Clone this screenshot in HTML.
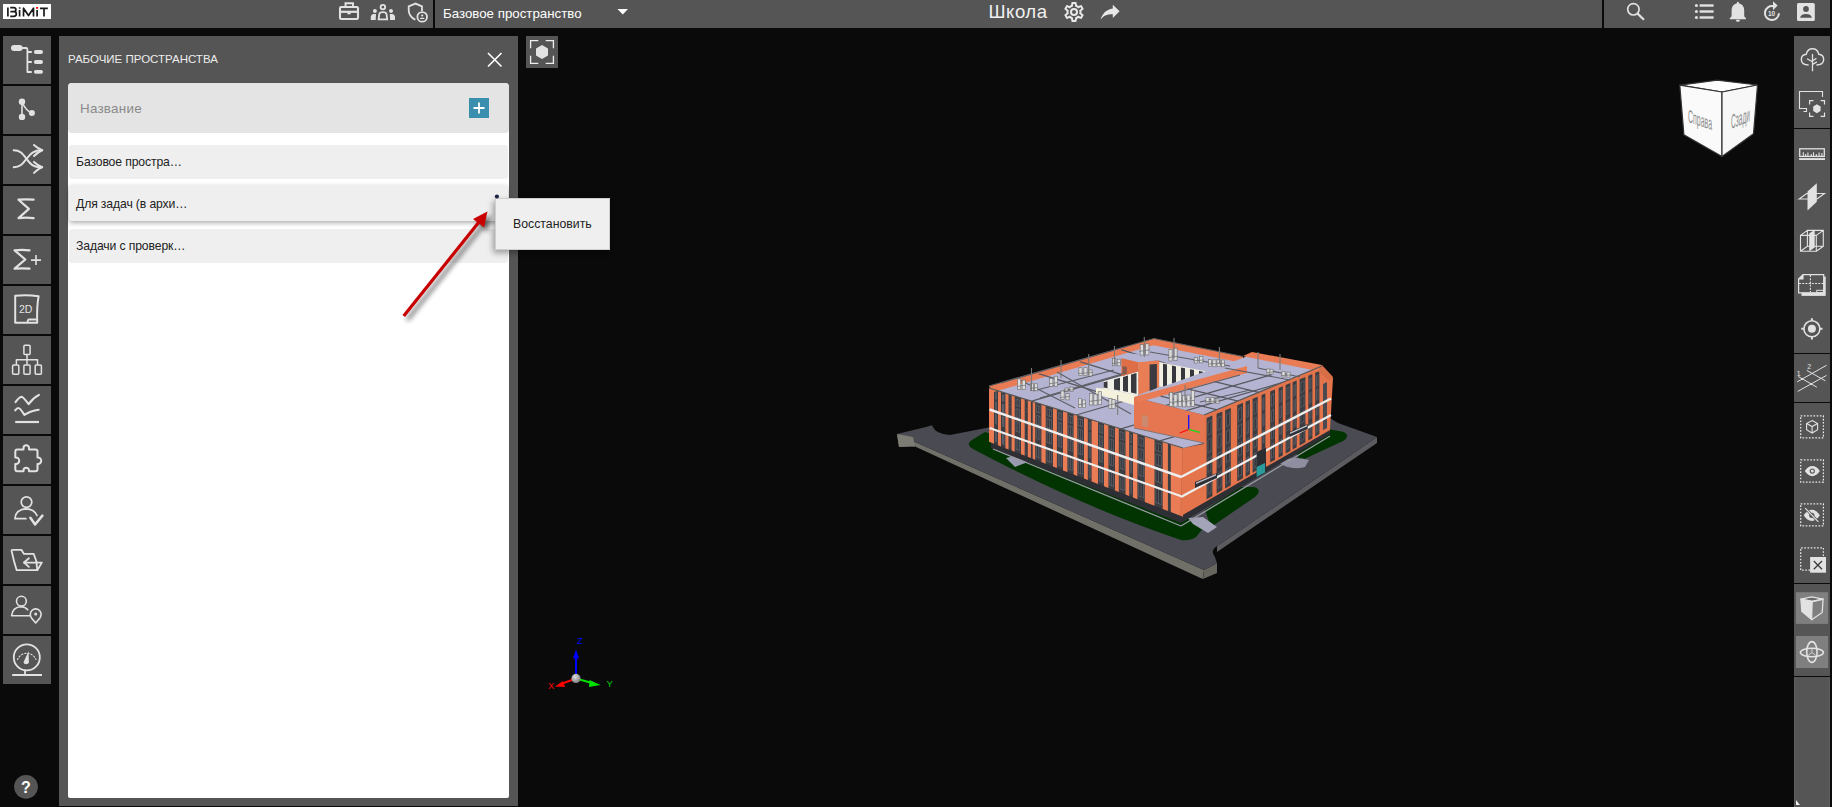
<!DOCTYPE html>
<html><head><meta charset="utf-8">
<style>
*{margin:0;padding:0;box-sizing:border-box}
html,body{width:1832px;height:807px;overflow:hidden;background:#0a0a0a;font-family:"Liberation Sans",sans-serif;position:relative}
.abs{position:absolute}
svg{position:absolute;overflow:visible}
#top{left:0;top:0;width:1830px;height:28px;background:#555}
.sep{position:absolute;top:0;width:2px;height:28px;background:#0a0a0a}
.lb{position:absolute;left:3px;width:48px;height:48px;background:#555}
#panel{left:59px;top:36px;width:459px;height:770px;background:#555}
#ptitle{left:68px;top:53px;color:#ececec;font-size:11.5px;white-space:nowrap}
#pwhite{left:68px;top:83px;width:441px;height:715px;background:#fff;border-radius:4px 4px 2px 2px}
#inp{left:68px;top:83px;width:441px;height:50px;background:#e4e4e4;border-radius:4px}
#inph{left:80px;top:100.5px;color:#8a8a8a;font-size:13.4px;letter-spacing:0.25px;white-space:nowrap}
.item{position:absolute;left:69px;width:439px;background:#efefef;border-radius:3px;font-size:12.2px;letter-spacing:-0.12px;color:#222;white-space:nowrap}
.item span{position:absolute;left:7px}
#rbar{left:1794px;top:36px;width:36px;height:771px;background:#555}
.rsep{position:absolute;left:1794px;width:36px;height:1px;background:#0a0a0a}
.txt{position:absolute;white-space:nowrap}
</style></head><body>
<div id="top" class="abs"></div>
<div class="sep" style="left:433px"></div>
<div class="sep" style="left:1602px"></div>

<!-- logo -->
<svg style="left:0;top:0" width="60" height="24">
<rect x="3" y="4" width="48" height="15" fill="#fff"/>
<g stroke="#1a1a1a" stroke-width="1.7" fill="none" stroke-linejoin="round">
<path d="M7.9 7.5V16.4"/>
<path d="M10.2 7.7H13.6Q15.9 7.7 15.9 9.7Q15.9 11.7 13.6 11.7H10.4M13.8 11.7Q16.3 11.7 16.3 14Q16.3 16.3 13.8 16.3H10.2"/>
<path d="M19.6 10V16.4M23.5 16.4V8.2L28.5 15.6L33.5 8.2V16.4M37.1 10V16.4M40 8.3H47.8M44 8.3V16.4"/>
</g>
<rect x="18.8" y="7.3" width="1.7" height="1.4" fill="#1a1a1a"/>
<rect x="36.1" y="7" width="2" height="1.8" fill="#f00"/>
</svg>

<!-- top bar icons -->
<svg style="left:334px;top:0" width="100" height="28" fill="none" stroke="#e2e2e2">
<!-- briefcase -->
<rect x="6" y="7" width="18" height="12" rx="1.2" stroke-width="2.1"/>
<path d="M11.5 6.8V3.3H19V6.8" stroke-width="1.9"/>
<path d="M6 11.8H24" stroke-width="2.2"/>
<rect x="13.4" y="11.6" width="3.3" height="2.7" fill="#e2e2e2" stroke="none"/>
<!-- people -->
<circle cx="48.9" cy="7.1" r="2.3" stroke-width="1.8"/>
<circle cx="40.9" cy="10.9" r="2" fill="#e2e2e2" stroke="none"/>
<circle cx="57" cy="10.9" r="2" fill="#e2e2e2" stroke="none"/>
<path d="M44.6 19.3L45.3 14Q45.8 12.2 48.9 12.2Q52 12.2 52.5 14L53.2 19.3Z" stroke-width="1.8"/>
<path d="M36.8 19.9V16.5Q37.2 14.2 39.5 14.1H42L41.7 19.9Z M61 19.9V16.5Q60.6 14.2 58.3 14.1H55.8L56.1 19.9Z" fill="#e2e2e2" stroke="none"/>
<!-- shield -->
<path d="M81.4 19.8Q74.7 16.5 74.7 10V6.4L81.5 3.6L88 6.4V11" stroke-width="1.8"/>
<circle cx="88.2" cy="16.9" r="4.8" stroke-width="1.8"/>
<circle cx="88.2" cy="15.5" r="1.1" fill="#e2e2e2" stroke="none"/>
<path d="M85.7 19Q85.9 17.4 88.2 17.4Q90.5 17.4 90.7 19Z" fill="#e2e2e2" stroke="none"/>
</svg>

<div class="txt" style="left:443px;top:5.5px;color:#fff;font-size:13.3px">Базовое пространство</div>
<svg style="left:617px;top:8px" width="12" height="8"><path d="M0.5 1H11L5.75 6.5Z" fill="#fff"/></svg>

<div class="txt" style="left:988.5px;top:1px;color:#f0f0f0;font-size:18.6px;letter-spacing:0.5px">Школа</div>
<!-- gear -->
<svg style="left:1062px;top:0px" width="24" height="24" viewBox="0 0 24 24">
<path fill="#e8e8e8" d="M12,8A4,4 0 0,1 16,12A4,4 0 0,1 12,16A4,4 0 0,1 8,12A4,4 0 0,1 12,8M12,10A2,2 0 0,0 10,12A2,2 0 0,0 12,14A2,2 0 0,0 14,12A2,2 0 0,0 12,10M10,22C9.75,22 9.54,21.82 9.5,21.58L9.13,18.93C8.5,18.68 7.96,18.34 7.44,17.94L4.95,18.95C4.73,19.03 4.46,18.95 4.34,18.73L2.34,15.27C2.21,15.05 2.27,14.78 2.46,14.63L4.57,12.97L4.5,12L4.57,11L2.46,9.37C2.27,9.22 2.21,8.95 2.34,8.73L4.34,5.27C4.46,5.05 4.73,4.96 4.95,5.05L7.44,6.05C7.96,5.66 8.5,5.32 9.13,5.07L9.5,2.42C9.54,2.18 9.75,2 10,2H14C14.25,2 14.46,2.18 14.5,2.42L14.87,5.07C15.5,5.32 16.04,5.66 16.56,6.05L19.05,5.05C19.27,4.96 19.54,5.05 19.66,5.27L21.66,8.73C21.79,8.95 21.73,9.22 21.54,9.37L19.43,11L19.5,12L19.43,13L21.54,14.63C21.73,14.78 21.79,15.05 21.66,15.27L19.66,18.73C19.54,18.95 19.27,19.04 19.05,18.95L16.56,17.95C16.04,18.34 15.5,18.68 14.87,18.93L14.5,21.58C14.46,21.82 14.25,22 14,22H10M11.25,4L10.88,6.61C9.68,6.86 8.62,7.5 7.85,8.39L5.44,7.35L4.69,8.65L6.8,10.2C6.4,11.37 6.4,12.64 6.8,13.8L4.68,15.36L5.43,16.66L7.86,15.62C8.63,16.5 9.68,17.14 10.87,17.38L11.24,20H12.76L13.13,17.39C14.32,17.14 15.37,16.5 16.14,15.62L18.57,16.66L19.32,15.36L17.2,13.81C17.6,12.64 17.6,11.37 17.2,10.2L19.31,8.65L18.56,7.35L16.15,8.39C15.38,7.5 14.32,6.86 13.12,6.62L12.75,4H11.25Z"/>
</svg>
<!-- share arrow -->
<svg style="left:1100px;top:4px" width="20" height="18" viewBox="0 0 20 18">
<path fill="#e8e8e8" d="M19.6 7.3L12.8 0.8V4.6C5.8 5.6 2.2 10.2 0.6 15.6C3.2 12 6.5 10.2 12.8 10.2V14.1Z"/>
</svg>

<!-- top right icons -->
<svg style="left:1620px;top:0" width="212" height="28" fill="none" stroke="#e2e2e2">
<circle cx="13.4" cy="9.3" r="5.7" stroke-width="1.7"/>
<path d="M17.6 13.6L24 19.8" stroke-width="2.2"/>
<g fill="#e2e2e2" stroke="none">
<circle cx="76.4" cy="5.5" r="1.5"/><circle cx="76.4" cy="11.5" r="1.5"/><circle cx="76.4" cy="17.5" r="1.5"/>
<rect x="79.6" y="4.3" width="14" height="2.4"/><rect x="79.6" y="10.3" width="14" height="2.4"/><rect x="79.6" y="16.3" width="14" height="2.4"/>
<!-- bell -->
<path d="M117.9 1.8Q118.9 1.8 118.9 3.2Q124.2 4.6 124.2 10.5V16.2L126 18.3V19.3H109.8V18.3L111.6 16.2V10.5Q111.6 4.6 116.9 3.2Q116.9 1.8 117.9 1.8Z"/>
<path d="M115.8 19.8H120Q120 21.9 117.9 21.9Q115.8 21.9 115.8 19.8Z"/>
<!-- account box -->
<rect x="177" y="3" width="17.8" height="18" rx="1.6"/>
</g>
<!-- replay 10 -->
<path d="M153.5 6.3A7 7 0 1 0 158.9 13.2" stroke-width="2"/>
<path d="M153 1.2L157.6 5.6L153 10.2Z" fill="#e2e2e2" stroke="none"/>
<text x="148" y="15.6" font-size="6.5" font-weight="bold" fill="#e2e2e2" stroke="none" font-family="Liberation Sans">10</text>
<circle cx="186" cy="9" r="2.9" fill="#555" stroke="none"/>
<path d="M180.1 17.8Q180.6 14 186 14Q191.4 14 191.9 17.8Z" fill="#555" stroke="none"/>
</svg>

<!-- left sidebar -->
<div class="lb" style="top:36px"></div>
<div class="lb" style="top:86px"></div>
<div class="lb" style="top:136px"></div>
<div class="lb" style="top:186px"></div>
<div class="lb" style="top:236px"></div>
<div class="lb" style="top:286px"></div>
<div class="lb" style="top:336px"></div>
<div class="lb" style="top:386px"></div>
<div class="lb" style="top:436px"></div>
<div class="lb" style="top:486px"></div>
<div class="lb" style="top:536px"></div>
<div class="lb" style="top:586px"></div>
<div class="lb" style="top:636px"></div>

<svg style="left:3px;top:36px" width="48" height="650" fill="none" stroke="#e2e2e2" stroke-linecap="round" stroke-linejoin="round">
<!-- 1 tree -->
<g>
<rect x="8" y="9" width="11.6" height="6" rx="3" fill="#e2e2e2" stroke="none"/>
<rect x="30.9" y="14" width="9.1" height="3.9" rx="1.95" fill="#e2e2e2" stroke="none"/>
<rect x="30.9" y="24.1" width="9.1" height="3.9" rx="1.95" fill="#e2e2e2" stroke="none"/>
<rect x="30.9" y="33.9" width="9.1" height="3.9" rx="1.95" fill="#e2e2e2" stroke="none"/>
<path d="M19 12H23Q24.4 12 24.4 13.4V36H28.8M24.4 16H28.8M24.4 26H28.8" stroke-width="1.8" stroke-linecap="butt"/>
</g>
<!-- 2 branch -->
<g transform="translate(0,50)">
<circle cx="19" cy="15.8" r="3.2" fill="#e2e2e2" stroke="none"/>
<circle cx="19" cy="30.9" r="3.2" fill="#e2e2e2" stroke="none"/>
<circle cx="28.9" cy="27" r="3" fill="#e2e2e2" stroke="none"/>
<path d="M19 16V31M19.5 17Q23 24.5 28.5 27" stroke-width="1.6"/>
</g>
<!-- 3 shuffle -->
<g transform="translate(0,100)" stroke-width="2">
<path d="M10.7 14.3C17 14.3 19.5 17.5 23.5 22.9S30 31.2 39 31.2"/>
<path d="M10.7 31.2C17 31.2 19.5 28 23.5 22.9S30 14.3 39 14.3"/>
<path d="M31 9Q35 12.6 39.3 14.3Q35 16 31 20"/>
<path d="M31 25.9Q35 29.5 39.3 31.2Q35 33 31 36.9"/>
</g>
<!-- 4 sigma -->
<g transform="translate(0,150)" stroke-width="2.2">
<path d="M30.6 13.7Q23 12.9 15.5 13.7L25.9 22.9L15.5 32.1Q23 31.3 30.6 32.1"/>
</g>
<!-- 5 sigma plus -->
<g transform="translate(0,200)">
<path d="M26.5 14.3Q19 13.5 11.6 14.3L22.3 23.5L11.6 32.7Q19 31.9 26.5 32.7" stroke-width="2.2"/>
<path d="M28 24.1H38M33 19.1V29.1" stroke-width="1.6" stroke-linecap="butt"/>
</g>
<!-- 6 2D -->
<g transform="translate(0,250)">
<path d="M12.2 9.7Q24 8.4 35.6 10.2Q33.7 20 34.2 36.7H12.2Z" stroke-width="2"/>
<path d="M24.5 35.5L25.5 33.5H33" stroke-width="1.8"/>
<text x="16" y="26.8" font-size="10.5" fill="#e2e2e2" stroke="none" font-family="Liberation Sans">2D</text>
</g>
<!-- 7 hierarchy -->
<g transform="translate(0,300)" stroke-width="1.5">
<rect x="20.9" y="9.3" width="6.2" height="9.3" rx="1"/>
<path d="M24 18.6V28M13.4 28V23.8H34.5V28"/>
<rect x="9.6" y="29" width="6.2" height="9.3" rx="1"/>
<rect x="20.9" y="29" width="6.2" height="9.3" rx="1"/>
<rect x="32.2" y="29" width="6.2" height="9.3" rx="1"/>
</g>
<!-- 8 charts -->
<g transform="translate(0,350)" stroke-width="2">
<path d="M12.5 16.1Q16 11 18.7 10.7Q20 10.7 25.6 18.1Q30 12 36 8.9"/>
<path d="M12.2 24.4Q14 21.8 15.5 22Q17 22 21.4 28.9Q26 26 29.7 25Q33 24 35.7 23.8"/>
<path d="M12.2 36H36" stroke-linecap="butt" stroke-width="2.2"/>
</g>
<!-- 9 puzzle -->
<g transform="translate(0,400)" stroke-width="2">
<path d="M20.5 13.5V12A2.75 2.75 0 0 1 26 12V13.5H32.5A2 2 0 0 1 34.5 15.5V21.5H35A3.25 3.25 0 0 1 35 28H34.5V33.3A2 2 0 0 1 32.5 35.3H26V34.5A2.75 2.75 0 0 0 20.5 34.5V35.3H14.3A2 2 0 0 1 12.3 33.3V28H13A3.25 3.25 0 0 0 13 21.5H12.3V15.5A2 2 0 0 1 14.3 13.5Z"/>
</g>
<!-- 10 person check -->
<g transform="translate(0,450)">
<circle cx="23.5" cy="16.1" r="5.3" stroke-width="1.7"/>
<path d="M22.9 32.7H11.9Q12.5 23.5 23 22.9Q31 23 34 29.5" stroke-width="1.7"/>
<path d="M27.4 31.8L32.1 38.5L39.4 29.6" stroke-width="2.5"/>
</g>
<!-- 11 folder -->
<g transform="translate(0,500)" stroke-width="1.8">
<path d="M33.5 25.5L30.6 17.8H20.8L18.4 13.8H9.5Q8.4 13.8 8.6 15Q11 26 13.7 34.2H34.3L38.8 26.6H21"/>
<path d="M34.3 34.2L33.4 26"/>
<path d="M25.9 22.3L21 26.5L25.9 30.9"/>
</g>
<!-- 12 person pin -->
<g transform="translate(0,550)" stroke-width="1.6">
<circle cx="18.4" cy="15.2" r="4.9"/>
<path d="M26.8 29.7H8.6Q9.5 21 18.3 20.8Q22.5 20.9 24.7 23.8"/>
<path d="M32.7 37L28.5 32Q27.3 30.4 27.3 28.3A5.4 5.4 0 0 1 38.1 28.3Q38.1 30.4 36.9 32Z"/>
<circle cx="32.7" cy="28" r="1.5" fill="#e2e2e2" stroke="none"/>
</g>
<!-- 13 gauge -->
<g transform="translate(0,600)">
<circle cx="23.8" cy="21.4" r="13" stroke-width="1.8"/>
<path d="M14.5 23.5A10 10 0 0 1 33 23.5" stroke-width="1.1" stroke-dasharray="1.2 2"/>
<path d="M25.6 15.2L20.5 26.2Q21 28.4 23.3 28.3Q25.3 28.2 25.9 26.5Z" fill="#e2e2e2" stroke="none"/>
<path d="M22 34.4V38" stroke-width="1.8"/>
<path d="M9.2 39H39" stroke-width="2" stroke-linecap="butt"/>
</g>
</svg>

<!-- help -->
<svg style="left:14px;top:775px" width="24" height="24">
<circle cx="12" cy="11.8" r="11.9" fill="#555"/>
<text x="12" y="18" text-anchor="middle" font-size="16" font-weight="bold" fill="#fff" font-family="Liberation Sans">?</text>
</svg>

<!-- panel -->
<div id="panel" class="abs"></div>
<div id="ptitle" class="abs">РАБОЧИЕ ПРОСТРАНСТВА</div>
<svg style="left:487px;top:52px" width="16" height="16"><path d="M1 1L14.5 14.5M14.5 1L1 14.5" stroke="#fff" stroke-width="1.6"/></svg>
<div id="pwhite" class="abs"></div>
<div id="inp" class="abs"></div>
<div id="inph" class="abs">Название</div>
<svg style="left:469px;top:98px" width="20" height="20"><rect width="20" height="20" fill="#3a8eae"/><path d="M10 4.5V15.5M4.5 10H15.5" stroke="#fff" stroke-width="1.8"/></svg>
<div class="item" style="top:145px;height:34px"><span style="top:10px">Базовое простра…</span></div>
<div class="item" style="top:185px;height:36px;box-shadow:0 2px 5px rgba(0,0,0,0.32)"><span style="top:12px">Для задач (в архи…</span></div>
<div class="item" style="top:229px;height:34px"><span style="top:10px">Задачи с проверк…</span></div>

<!-- viewer button -->
<svg style="left:526px;top:36px" width="32" height="32">
<rect width="32" height="32" fill="#555"/>
<path d="M4.6 12.3V4.6H12.3M19.7 4.6H27.4V12.3M27.4 19.7V27.4H19.7M12.3 27.4H4.6V19.7" fill="none" stroke="#eee" stroke-width="1.3"/>
<path d="M16 8.9L22 12.4V19.6L16 23.1L10 19.6V12.4Z" fill="#e2e2e2"/>
</svg>

<!-- right bar -->
<div id="rbar" class="abs"></div>
<div class="rsep" style="top:128px"></div>
<div class="rsep" style="top:353px"></div>
<div class="rsep" style="top:402px"></div>
<div class="rsep" style="top:583px"></div>
<div class="rsep" style="top:676px"></div>

<!-- right bar icons -->
<svg style="left:1794px;top:0" width="36" height="700" fill="none" stroke="#e2e2e2" stroke-width="1.3">
<!-- tree -->
<path d="M14.6 25Q7.5 25 7.3 19.5Q7.4 14.5 12.3 14.2Q13.5 8.8 18.5 8.8Q23.5 8.8 24.7 14.2Q29.6 14.6 29.7 19.5Q29.5 25 22.4 25" transform="translate(0,40)" stroke-width="1.4"/>
<path d="M18.5 54V71.2M13 58.7L18.5 61.8M22.4 58.2L18.5 61M22.9 61.9L18.5 64.5" stroke-width="1.3"/>
<!-- zoom select -->
<path d="M28.5 97V91.5H5.5V108.5H12.5V111.5H9.5" stroke-width="1.1"/>
<path d="M15.6 104.5V100.6H19.5M26.6 100.6H30.5V104.5M30.5 112.4V116.3H26.6M19.5 116.3H15.6V112.4" stroke-width="1.2"/>
<path d="M22.9 104.2L26.6 106.4V111L22.9 113.2L19.2 111V106.4Z" fill="#e2e2e2" stroke="none"/>
<!-- ruler -->
<rect x="5.7" y="148.8" width="24.6" height="7.6" stroke-width="1.3"/>
<path d="M9.3 152.2V156M11.6 154V156M13.9 152.5V156M17.2 154V156M19.5 152.2V156M22.3 154V156M25.1 152.5V156M27.9 153V156" stroke-width="1.1"/>
<rect x="5.1" y="158.1" width="25.9" height="1.9" fill="#e2e2e2" stroke="none"/>
<!-- plane -->
<path d="M13.5 191.6L22.8 183.2V201.8L13.5 210.6Z" fill="#e2e2e2" stroke="none"/>
<path d="M5.2 199L12.7 193.5H30.4L23 199Z" stroke-width="1.2"/>
<!-- cube section -->
<path d="M6.5 235.4H22.3V251.3H6.5Z M13.4 230.4H29.3V246.3H13.4Z M6.5 235.4L13.4 230.4M22.3 235.4L29.3 230.4M22.3 251.3L29.3 246.3M6.5 251.3L13.4 246.3" stroke-width="1.1"/>
<path d="M15.2 233.5L20.7 229.8V247.5L15.2 251.3Z" fill="#e2e2e2" stroke="none"/>
<!-- floor plan -->
<path d="M7.5 276.5H31.7V295.9H7.5Z" fill="#e2e2e2" stroke="none"/>
<path d="M9 274.6H29.7V292.8H4.6V279Z" fill="#555" stroke-width="1.2"/>
<path d="M4.6 279H9V274.6" stroke-width="1.1" fill="#e2e2e2"/>
<path d="M5 283.5H29.5M16.4 275V292.5" stroke-width="1.1" stroke-dasharray="2 1.2"/>
<rect x="22.8" y="290.3" width="6.5" height="2.5" stroke-width="1"/>
<!-- target -->
<circle cx="17.9" cy="328.8" r="8" stroke-width="1.6"/>
<circle cx="17.9" cy="328.8" r="4" fill="#e2e2e2" stroke="none"/>
<path d="M17.9 318.2V320.8M17.9 336.8V339.4M7.3 328.8H9.9M25.9 328.8H28.5" stroke-width="2"/>
<!-- grid -->
<path d="M3.2 381.8L32.5 365.3M3.7 391.4L32.5 375.4M4.3 376.5L22.9 387.2M12.8 370.4L31.4 380.8" stroke-width="1"/>
<circle cx="8" cy="379" r="1" fill="#e2e2e2" stroke="none"/>
<circle cx="17" cy="384" r="1" fill="#e2e2e2" stroke="none"/>
<text x="2.8" y="376" font-size="7" fill="#e2e2e2" stroke="none" font-family="Liberation Sans">1</text>
<text x="13.3" y="369" font-size="7" fill="#e2e2e2" stroke="none" font-family="Liberation Sans">2</text>
<!-- dashed boxes -->
<g stroke-dasharray="1.6 1.6" stroke-width="1.2" stroke="#eee">
<rect x="6.7" y="415.9" width="22.7" height="22"/>
<rect x="6.7" y="459.9" width="22.7" height="22.2"/>
<rect x="6.7" y="503.9" width="22.7" height="22"/>
<path d="M16.1 570.1H6.7V547.9H29.4V557"/>
</g>
<!-- cube in box -->
<path d="M18.1 420.6L23.6 423.5V429.8L18.1 433L12.6 429.8V423.5Z M12.6 423.5L18.1 426.5L23.6 423.5M18.1 426.5V433" stroke-width="1.1"/>
<!-- eye -->
<path d="M10.8 471.1Q14 466 18.3 466Q22.6 466 25.8 471.1Q22.6 476.2 18.3 476.2Q14 476.2 10.8 471.1Z" fill="#e2e2e2" stroke="none"/>
<circle cx="18.3" cy="471.1" r="2.6" fill="#555" stroke="none"/>
<circle cx="18.3" cy="471.1" r="1.5" fill="#e2e2e2" stroke="none"/>
<!-- eye off -->
<path d="M9.7 515.3Q13.2 509.7 17.8 509.7Q22.4 509.7 25.9 515.3Q22.4 520.9 17.8 520.9Q13.2 520.9 9.7 515.3Z" fill="#e2e2e2" stroke="none"/>
<circle cx="17.8" cy="515.3" r="2.6" fill="#555" stroke="none"/>
<path d="M11.2 508.2L24.4 521.9" stroke="#555" stroke-width="2.6"/>
<path d="M11.2 508.2L24.4 521.9" stroke-width="1.2"/>
<!-- X square -->
<rect x="16.1" y="557" width="15.9" height="15.7" fill="#e2e2e2" stroke="none"/>
<path d="M19.8 561L28 569.2M28 561L19.8 569.2" stroke="#3c3c3c" stroke-width="1.3"/>
<!-- cube box -->
<rect x="1.9" y="592.2" width="32.2" height="31.7" fill="#7f7f7f" stroke="none"/>
<path d="M6.8 599.1L17.7 596.8L29.1 599.1L18.2 601.5Z" fill="#6a6a6a" stroke="#e2e2e2" stroke-width="1.3"/>
<path d="M6.8 599.1L18.2 601.5L17.7 619.7L7.8 611.4Z" fill="#e2e2e2" stroke="#e2e2e2" stroke-width="1.1"/>
<path d="M18.2 601.5L29.1 599.1L28.2 612.5L17.7 619.7" stroke-width="1.3"/>
<!-- orbit box -->
<rect x="1.9" y="636" width="32.2" height="32" fill="#7f7f7f" stroke="none"/>
<ellipse cx="17.9" cy="652" rx="5.2" ry="10.4" stroke-width="1.6"/>
<ellipse cx="17.9" cy="652.5" rx="11.5" ry="4.3" stroke-width="1.6"/>
<path d="M17.9 648.5V652.5L14 655.5M17.9 652.5L21.8 655.5" stroke-width="0.8"/>
<!-- bottom group border -->
<path d="M0.5 677V807M35.5 677V807" stroke="#5e5e5e" stroke-width="1"/>
<path d="M2 800V805H6Z" fill="#eee" stroke="none"/>
</svg>

<!-- popup -->
<div class="abs" style="left:495px;top:198px;width:115px;height:52px;background:#efefef;border:1px solid #cfcfcf;box-shadow:-2px 3px 6px rgba(0,0,0,0.35)"></div>
<svg style="left:492px;top:192px" width="10" height="6"><circle cx="4.9" cy="4.5" r="2.1" fill="#1e2440"/></svg>
<div class="txt" style="left:513px;top:217px;color:#222;font-size:12.3px">Восстановить</div>

<!-- red arrow -->
<svg style="left:0;top:0" width="600" height="400">
<defs><filter id="sh" x="-20%" y="-20%" width="140%" height="140%"><feGaussianBlur stdDeviation="2.4"/></filter></defs>
<g transform="translate(3.5,4)" opacity="0.6" filter="url(#sh)">
<path d="M403.7 316L479 222" stroke="#000" stroke-width="3.2"/>
<path d="M487.4 211.6L473 219L484.2 227.4Z" fill="#000"/>
</g>
<path d="M403.7 316L479 222" stroke="#c80000" stroke-width="3.2"/>
<path d="M487.4 211.6L473 219L484.2 227.4Z" fill="#c80000"/>
</svg>

<!-- BUILDING START --><svg style="left:0;top:0" width="1832" height="807"><path d="M897 434L899 447Q906 446.5 915 446.5L1202.7 579L1204 570Z" fill="#707068"/><path d="M1204 570L1203 579L1217 573L1217 563Z" fill="#66665f"/><path d="M1377 437L1377 443L1217 552L1217 546Z" fill="#5c5c60"/><path d="M897 434L926 427L932 425.3Q935 434 950 435L991 427L1100 400L1300 400L1338 423L1377 437L1217 546Q1210 551 1214.5 556L1217 563L1204 570Z" fill="#4a4a52"/><path d="M897 434L899 447Q908 446 915 446.5L913 437Z" fill="#7c7c74"/><path d="M972 440Q965 444 973 449Q1080 506 1181 540Q1190 541 1196 537L1205 526L1190 519L1100 470L985 432Z" fill="#023402"/><path d="M1211 527L1255 497Q1263 490 1254 487L1240 487L1205 510Z" fill="#023402"/><path d="M1300 461L1343 441Q1351 436 1344 432L1328 429L1296 452Z" fill="#023402"/><polygon points="1188.0,518.0 1203.0,517.0 1217.0,527.0 1208.0,533.0 1193.0,524.0" fill="#a4a4b8"/><polygon points="1006.0,458.0 1018.0,455.0 1028.0,462.0 1015.0,467.0" fill="#9a9aae"/><path d="M1278 462Q1292 455 1309 460L1305 467Q1290 471 1278 462Z" fill="#8e8ea0"/><polygon points="1268.0,455.0 1300.0,440.0 1306.0,447.0 1276.0,461.0" fill="#7a7a86" /><polygon points="991.0,440.0 1181.0,514.0 1181.0,523.0 991.0,448.0" fill="#2e2f34" /><path d="M993.0 449.0L1181.0 526.0" stroke="#9a9aa4" stroke-width="1.3" /><path d="M1181.0 526.0L1330.0 436.0" stroke="#9a9aa4" stroke-width="1.3" /><polygon points="1181.0,514.0 1330.0,426.0 1330.0,434.0 1181.0,523.0" fill="#2e2f34" /><polygon points="989.0,388.0 1183.0,448.0 1181.0,516.0 992.0,443.0" fill="#3c3d42" /><polygon points="995.0,392.0 997.0,392.7 997.0,399.7 995.0,399.1" fill="#5d6068" /><polygon points="995.8,392.9 995.6,393.2 995.6,398.5 995.8,398.2" fill="#34363c" /><polygon points="996.4,393.2 996.2,393.6 996.2,398.8 996.4,398.5" fill="#34363c" /><polygon points="995.0,401.3 997.0,401.9 997.0,411.2 995.0,410.5" fill="#5d6068" /><polygon points="995.8,402.2 995.6,402.5 995.6,409.9 995.8,409.6" fill="#34363c" /><polygon points="996.4,402.5 996.2,402.8 996.2,410.3 996.4,409.9" fill="#34363c" /><polygon points="995.0,413.7 997.0,414.4 997.0,424.8 995.0,424.1" fill="#5d6068" /><polygon points="995.8,414.6 995.6,415.0 995.6,423.5 995.8,423.2" fill="#34363c" /><polygon points="996.4,415.0 996.2,415.3 996.2,423.9 996.4,423.5" fill="#34363c" /><polygon points="995.0,429.0 997.0,429.7 997.0,442.2 995.0,441.4" fill="#5d6068" /><polygon points="995.8,429.9 995.6,430.2 995.6,440.9 995.8,440.5" fill="#34363c" /><polygon points="996.4,430.2 996.2,430.6 996.2,441.3 996.4,440.9" fill="#34363c" /><polygon points="1002.0,394.2 1004.4,395.0 1004.4,402.1 1002.0,401.3" fill="#5d6068" /><polygon points="1002.8,395.1 1002.8,395.5 1002.8,400.8 1002.8,400.4" fill="#34363c" /><polygon points="1003.6,395.5 1003.6,395.9 1003.6,401.2 1003.6,400.8" fill="#34363c" /><polygon points="1002.0,403.5 1004.4,404.3 1004.4,413.7 1002.0,412.9" fill="#5d6068" /><polygon points="1002.8,404.4 1002.8,404.8 1002.8,412.4 1002.8,412.0" fill="#34363c" /><polygon points="1003.6,404.8 1003.6,405.2 1003.6,412.8 1003.6,412.4" fill="#34363c" /><polygon points="1002.0,416.2 1004.4,417.0 1004.4,427.4 1002.0,426.6" fill="#5d6068" /><polygon points="1002.8,417.1 1002.8,417.5 1002.8,426.1 1002.8,425.7" fill="#34363c" /><polygon points="1003.6,417.5 1003.6,417.9 1003.6,426.5 1003.6,426.1" fill="#34363c" /><polygon points="1002.0,431.5 1004.4,432.4 1004.4,445.0 1002.0,444.1" fill="#5d6068" /><polygon points="1002.8,432.4 1002.8,432.8 1002.8,443.7 1002.8,443.2" fill="#34363c" /><polygon points="1003.6,432.8 1003.6,433.3 1003.6,444.1 1003.6,443.7" fill="#34363c" /><polygon points="1009.5,396.6 1010.6,396.9 1010.6,404.1 1009.5,403.8" fill="#5d6068" /><polygon points="1010.3,397.5 1009.6,397.6 1009.6,403.0 1010.3,402.9" fill="#34363c" /><polygon points="1010.4,397.6 1009.8,397.8 1009.8,403.2 1010.4,403.0" fill="#34363c" /><polygon points="1009.5,406.0 1010.6,406.3 1010.6,415.8 1009.5,415.4" fill="#5d6068" /><polygon points="1010.3,406.9 1009.6,407.1 1009.6,414.7 1010.3,414.5" fill="#34363c" /><polygon points="1010.4,407.1 1009.8,407.2 1009.8,414.9 1010.4,414.7" fill="#34363c" /><polygon points="1009.5,418.7 1010.6,419.1 1010.6,429.6 1009.5,429.3" fill="#5d6068" /><polygon points="1010.3,419.6 1009.6,419.8 1009.6,428.6 1010.3,428.4" fill="#34363c" /><polygon points="1010.4,419.8 1009.8,420.0 1009.8,428.7 1010.4,428.6" fill="#34363c" /><polygon points="1009.5,434.2 1010.6,434.6 1010.6,447.4 1009.5,447.0" fill="#5d6068" /><polygon points="1010.3,435.1 1009.6,435.3 1009.6,446.3 1010.3,446.1" fill="#34363c" /><polygon points="1010.4,435.3 1009.8,435.5 1009.8,446.5 1010.4,446.3" fill="#34363c" /><polygon points="1015.7,398.5 1020.0,399.8 1020.0,407.1 1015.7,405.8" fill="#5d6068" /><polygon points="1016.5,399.4 1017.5,400.1 1017.5,405.6 1016.5,404.9" fill="#34363c" /><polygon points="1018.2,400.1 1019.2,400.7 1019.2,406.2 1018.2,405.6" fill="#34363c" /><polygon points="1015.7,408.0 1020.0,409.4 1020.0,419.0 1015.7,417.5" fill="#5d6068" /><polygon points="1016.5,408.9 1017.5,409.6 1017.5,417.3 1016.5,416.6" fill="#34363c" /><polygon points="1018.2,409.6 1019.2,410.3 1019.2,418.1 1018.2,417.3" fill="#34363c" /><polygon points="1015.7,420.9 1020.0,422.3 1020.0,433.0 1015.7,431.5" fill="#5d6068" /><polygon points="1016.5,421.8 1017.5,422.5 1017.5,431.3 1016.5,430.6" fill="#34363c" /><polygon points="1018.2,422.5 1019.2,423.2 1019.2,432.1 1018.2,431.3" fill="#34363c" /><polygon points="1015.7,436.5 1020.0,438.1 1020.0,451.0 1015.7,449.4" fill="#5d6068" /><polygon points="1016.5,437.4 1017.5,438.2 1017.5,449.3 1016.5,448.5" fill="#34363c" /><polygon points="1018.2,438.2 1019.2,439.0 1019.2,450.1 1018.2,449.3" fill="#34363c" /><polygon points="1025.7,401.6 1026.8,402.0 1026.8,409.3 1025.7,409.0" fill="#5d6068" /><polygon points="1026.5,402.5 1025.8,402.7 1025.8,408.3 1026.5,408.1" fill="#34363c" /><polygon points="1026.7,402.7 1026.0,402.9 1026.0,408.4 1026.7,408.3" fill="#34363c" /><polygon points="1025.7,411.3 1026.8,411.6 1026.8,421.3 1025.7,420.9" fill="#5d6068" /><polygon points="1026.5,412.2 1025.8,412.3 1025.8,420.2 1026.5,420.0" fill="#34363c" /><polygon points="1026.7,412.3 1026.0,412.5 1026.0,420.4 1026.7,420.2" fill="#34363c" /><polygon points="1025.7,424.3 1026.8,424.7 1026.8,435.4 1025.7,435.1" fill="#5d6068" /><polygon points="1026.5,425.2 1025.8,425.4 1025.8,434.3 1026.5,434.2" fill="#34363c" /><polygon points="1026.7,425.4 1026.0,425.6 1026.0,434.5 1026.7,434.3" fill="#34363c" /><polygon points="1025.7,440.1 1026.8,440.6 1026.8,453.6 1025.7,453.2" fill="#5d6068" /><polygon points="1026.5,441.0 1025.8,441.3 1025.8,452.5 1026.5,452.3" fill="#34363c" /><polygon points="1026.7,441.3 1026.0,441.5 1026.0,452.7 1026.7,452.5" fill="#34363c" /><polygon points="1036.2,404.9 1040.4,406.2 1040.4,413.7 1036.2,412.4" fill="#5d6068" /><polygon points="1037.0,405.8 1037.9,406.5 1037.9,412.1 1037.0,411.5" fill="#34363c" /><polygon points="1038.7,406.5 1039.6,407.1 1039.6,412.8 1038.7,412.1" fill="#34363c" /><polygon points="1036.2,414.7 1040.4,416.0 1040.4,425.9 1036.2,424.4" fill="#5d6068" /><polygon points="1037.0,415.6 1037.9,416.3 1037.9,424.2 1037.0,423.5" fill="#34363c" /><polygon points="1038.7,416.3 1039.6,416.9 1039.6,425.0 1038.7,424.2" fill="#34363c" /><polygon points="1036.2,427.9 1040.4,429.3 1040.4,440.3 1036.2,438.8" fill="#5d6068" /><polygon points="1037.0,428.8 1037.9,429.5 1037.9,438.7 1037.0,437.9" fill="#34363c" /><polygon points="1038.7,429.5 1039.6,430.2 1039.6,439.4 1038.7,438.7" fill="#34363c" /><polygon points="1036.2,444.0 1040.4,445.5 1040.4,458.8 1036.2,457.2" fill="#5d6068" /><polygon points="1037.0,444.9 1037.9,445.6 1037.9,457.1 1037.0,456.3" fill="#34363c" /><polygon points="1038.7,445.6 1039.6,446.4 1039.6,457.9 1038.7,457.1" fill="#34363c" /><polygon points="1046.7,408.2 1052.0,409.8 1052.0,417.5 1046.7,415.8" fill="#5d6068" /><polygon points="1047.5,409.1 1048.9,409.9 1048.9,415.7 1047.5,414.9" fill="#34363c" /><polygon points="1049.8,409.9 1051.2,410.7 1051.2,416.6 1049.8,415.7" fill="#34363c" /><polygon points="1046.7,418.1 1052.0,419.8 1052.0,429.8 1046.7,428.0" fill="#5d6068" /><polygon points="1047.5,419.0 1048.9,419.8 1048.9,428.0 1047.5,427.1" fill="#34363c" /><polygon points="1049.8,419.8 1051.2,420.7 1051.2,428.9 1049.8,428.0" fill="#34363c" /><polygon points="1046.7,431.5 1052.0,433.3 1052.0,444.5 1046.7,442.6" fill="#5d6068" /><polygon points="1047.5,432.4 1048.9,433.3 1048.9,442.6 1047.5,441.7" fill="#34363c" /><polygon points="1049.8,433.3 1051.2,434.2 1051.2,443.6 1049.8,442.6" fill="#34363c" /><polygon points="1046.7,447.8 1052.0,449.7 1052.0,463.2 1046.7,461.2" fill="#5d6068" /><polygon points="1047.5,448.7 1048.9,449.7 1048.9,461.3 1047.5,460.3" fill="#34363c" /><polygon points="1049.8,449.7 1051.2,450.6 1051.2,462.3 1049.8,461.3" fill="#34363c" /><polygon points="1057.9,411.7 1062.0,413.0 1062.0,420.7 1057.9,419.4" fill="#5d6068" /><polygon points="1058.7,412.6 1059.5,413.2 1059.5,419.1 1058.7,418.5" fill="#34363c" /><polygon points="1060.4,413.2 1061.2,413.9 1061.2,419.8 1060.4,419.1" fill="#34363c" /><polygon points="1057.9,421.7 1062.0,423.1 1062.0,433.2 1057.9,431.8" fill="#5d6068" /><polygon points="1058.7,422.6 1059.5,423.3 1059.5,431.6 1058.7,430.9" fill="#34363c" /><polygon points="1060.4,423.3 1061.2,424.0 1061.2,432.3 1060.4,431.6" fill="#34363c" /><polygon points="1057.9,435.3 1062.0,436.7 1062.0,448.0 1057.9,446.6" fill="#5d6068" /><polygon points="1058.7,436.2 1059.5,436.9 1059.5,446.4 1058.7,445.7" fill="#34363c" /><polygon points="1060.4,436.9 1061.2,437.6 1061.2,447.1 1060.4,446.4" fill="#34363c" /><polygon points="1057.9,451.9 1062.0,453.4 1062.0,467.1 1057.9,465.5" fill="#5d6068" /><polygon points="1058.7,452.8 1059.5,453.5 1059.5,465.4 1058.7,464.6" fill="#34363c" /><polygon points="1060.4,453.5 1061.2,454.3 1061.2,466.2 1060.4,465.4" fill="#34363c" /><polygon points="1068.4,415.0 1072.6,416.3 1072.6,424.1 1068.4,422.7" fill="#5d6068" /><polygon points="1069.2,415.9 1070.1,416.5 1070.1,422.5 1069.2,421.8" fill="#34363c" /><polygon points="1070.9,416.5 1071.8,417.2 1071.8,423.2 1070.9,422.5" fill="#34363c" /><polygon points="1068.4,425.1 1072.6,426.5 1072.6,436.8 1068.4,435.3" fill="#5d6068" /><polygon points="1069.2,426.0 1070.1,426.7 1070.1,435.1 1069.2,434.4" fill="#34363c" /><polygon points="1070.9,426.7 1071.8,427.4 1071.8,435.9 1070.9,435.1" fill="#34363c" /><polygon points="1068.4,438.9 1072.6,440.4 1072.6,451.8 1068.4,450.3" fill="#5d6068" /><polygon points="1069.2,439.8 1070.1,440.6 1070.1,450.2 1069.2,449.4" fill="#34363c" /><polygon points="1070.9,440.6 1071.8,441.3 1071.8,450.9 1070.9,450.2" fill="#34363c" /><polygon points="1068.4,455.7 1072.6,457.3 1072.6,471.1 1068.4,469.5" fill="#5d6068" /><polygon points="1069.2,456.6 1070.1,457.4 1070.1,469.4 1069.2,468.6" fill="#34363c" /><polygon points="1070.9,457.4 1071.8,458.2 1071.8,470.2 1070.9,469.4" fill="#34363c" /><polygon points="1078.3,418.0 1083.0,419.5 1083.0,427.5 1078.3,425.9" fill="#5d6068" /><polygon points="1079.1,418.9 1080.2,419.7 1080.2,425.8 1079.1,425.0" fill="#34363c" /><polygon points="1081.1,419.7 1082.2,420.4 1082.2,426.6 1081.1,425.8" fill="#34363c" /><polygon points="1078.3,428.4 1083.0,429.9 1083.0,440.3 1078.3,438.7" fill="#5d6068" /><polygon points="1079.1,429.3 1080.2,430.0 1080.2,438.6 1079.1,437.8" fill="#34363c" /><polygon points="1081.1,430.0 1082.2,430.8 1082.2,439.4 1081.1,438.6" fill="#34363c" /><polygon points="1078.3,442.3 1083.0,443.9 1083.0,455.6 1078.3,453.9" fill="#5d6068" /><polygon points="1079.1,443.2 1080.2,444.0 1080.2,453.8 1079.1,453.0" fill="#34363c" /><polygon points="1081.1,444.0 1082.2,444.8 1082.2,454.7 1081.1,453.8" fill="#34363c" /><polygon points="1078.3,459.3 1083.0,461.0 1083.0,475.1 1078.3,473.3" fill="#5d6068" /><polygon points="1079.1,460.2 1080.2,461.1 1080.2,473.3 1079.1,472.4" fill="#34363c" /><polygon points="1081.1,461.1 1082.2,461.9 1082.2,474.2 1081.1,473.3" fill="#34363c" /><polygon points="1088.8,421.3 1090.6,421.9 1090.6,429.9 1088.8,429.3" fill="#5d6068" /><polygon points="1089.6,422.2 1089.3,422.5 1089.3,428.7 1089.6,428.4" fill="#34363c" /><polygon points="1090.1,422.5 1089.8,422.8 1089.8,429.0 1090.1,428.7" fill="#34363c" /><polygon points="1088.8,431.8 1090.6,432.4 1090.6,442.9 1088.8,442.2" fill="#5d6068" /><polygon points="1089.6,432.7 1089.3,433.0 1089.3,441.6 1089.6,441.3" fill="#34363c" /><polygon points="1090.1,433.0 1089.8,433.3 1089.8,442.0 1090.1,441.6" fill="#34363c" /><polygon points="1088.8,445.9 1090.6,446.6 1090.6,458.3 1088.8,457.6" fill="#5d6068" /><polygon points="1089.6,446.8 1089.3,447.1 1089.3,457.0 1089.6,456.7" fill="#34363c" /><polygon points="1090.1,447.1 1089.8,447.5 1089.8,457.4 1090.1,457.0" fill="#34363c" /><polygon points="1088.8,463.2 1090.6,463.8 1090.6,478.0 1088.8,477.3" fill="#5d6068" /><polygon points="1089.6,464.1 1089.3,464.4 1089.3,476.8 1089.6,476.4" fill="#34363c" /><polygon points="1090.1,464.4 1089.8,464.7 1089.8,477.1 1090.1,476.8" fill="#34363c" /><polygon points="1099.0,424.5 1103.0,425.8 1103.0,433.9 1099.0,432.6" fill="#5d6068" /><polygon points="1099.8,425.4 1100.6,426.0 1100.6,432.4 1099.8,431.7" fill="#34363c" /><polygon points="1101.4,426.0 1102.2,426.7 1102.2,433.0 1101.4,432.4" fill="#34363c" /><polygon points="1099.0,435.1 1103.0,436.4 1103.0,447.1 1099.0,445.7" fill="#5d6068" /><polygon points="1099.8,436.0 1100.6,436.7 1100.6,445.5 1099.8,444.8" fill="#34363c" /><polygon points="1101.4,436.7 1102.2,437.3 1102.2,446.2 1101.4,445.5" fill="#34363c" /><polygon points="1099.0,449.4 1103.0,450.8 1103.0,462.7 1099.0,461.3" fill="#5d6068" /><polygon points="1099.8,450.3 1100.6,451.0 1100.6,461.1 1099.8,460.4" fill="#34363c" /><polygon points="1101.4,451.0 1102.2,451.7 1102.2,461.8 1101.4,461.1" fill="#34363c" /><polygon points="1099.0,466.9 1103.0,468.3 1103.0,482.7 1099.0,481.2" fill="#5d6068" /><polygon points="1099.8,467.8 1100.6,468.5 1100.6,481.1 1099.8,480.3" fill="#34363c" /><polygon points="1101.4,468.5 1102.2,469.2 1102.2,481.8 1101.4,481.1" fill="#34363c" /><polygon points="1109.4,427.8 1114.0,429.2 1114.0,437.4 1109.4,436.0" fill="#5d6068" /><polygon points="1110.2,428.7 1111.3,429.4 1111.3,435.8 1110.2,435.1" fill="#34363c" /><polygon points="1112.1,429.4 1113.2,430.1 1113.2,436.5 1112.1,435.8" fill="#34363c" /><polygon points="1109.4,438.5 1114.0,440.0 1114.0,450.8 1109.4,449.2" fill="#5d6068" /><polygon points="1110.2,439.4 1111.3,440.1 1111.3,449.1 1110.2,448.3" fill="#34363c" /><polygon points="1112.1,440.1 1113.2,440.9 1113.2,449.9 1112.1,449.1" fill="#34363c" /><polygon points="1109.4,453.0 1114.0,454.6 1114.0,466.6 1109.4,465.0" fill="#5d6068" /><polygon points="1110.2,453.9 1111.3,454.7 1111.3,464.9 1110.2,464.1" fill="#34363c" /><polygon points="1112.1,454.7 1113.2,455.5 1113.2,465.7 1112.1,464.9" fill="#34363c" /><polygon points="1109.4,470.7 1114.0,472.4 1114.0,486.9 1109.4,485.2" fill="#5d6068" /><polygon points="1110.2,471.6 1111.3,472.4 1111.3,485.2 1110.2,484.3" fill="#34363c" /><polygon points="1112.1,472.4 1113.2,473.3 1113.2,486.0 1112.1,485.2" fill="#34363c" /><polygon points="1119.8,431.0 1124.5,432.5 1124.5,440.8 1119.8,439.3" fill="#5d6068" /><polygon points="1120.6,431.9 1121.8,432.6 1121.8,439.2 1120.6,438.4" fill="#34363c" /><polygon points="1122.6,432.6 1123.7,433.4 1123.7,439.9 1122.6,439.2" fill="#34363c" /><polygon points="1119.8,441.9 1124.5,443.4 1124.5,454.3 1119.8,452.7" fill="#5d6068" /><polygon points="1120.6,442.8 1121.8,443.5 1121.8,452.6 1120.6,451.8" fill="#34363c" /><polygon points="1122.6,443.5 1123.7,444.3 1123.7,453.4 1122.6,452.6" fill="#34363c" /><polygon points="1119.8,456.6 1124.5,458.2 1124.5,470.4 1119.8,468.7" fill="#5d6068" /><polygon points="1120.6,457.5 1121.8,458.3 1121.8,468.7 1120.6,467.8" fill="#34363c" /><polygon points="1122.6,458.3 1123.7,459.1 1123.7,469.5 1122.6,468.7" fill="#34363c" /><polygon points="1119.8,474.5 1124.5,476.2 1124.5,491.0 1119.8,489.2" fill="#5d6068" /><polygon points="1120.6,475.4 1121.8,476.2 1121.8,489.2 1120.6,488.3" fill="#34363c" /><polygon points="1122.6,476.2 1123.7,477.1 1123.7,490.1 1122.6,489.2" fill="#34363c" /><polygon points="1130.2,434.3 1132.0,434.8 1132.0,443.3 1130.2,442.7" fill="#5d6068" /><polygon points="1131.0,435.2 1130.7,435.4 1130.7,442.1 1131.0,441.8" fill="#34363c" /><polygon points="1131.5,435.4 1131.2,435.7 1131.2,442.4 1131.5,442.1" fill="#34363c" /><polygon points="1130.2,445.3 1132.0,445.8 1132.0,456.9 1130.2,456.3" fill="#5d6068" /><polygon points="1131.0,446.2 1130.7,446.5 1130.7,455.7 1131.0,455.4" fill="#34363c" /><polygon points="1131.5,446.5 1131.2,446.7 1131.2,456.0 1131.5,455.7" fill="#34363c" /><polygon points="1130.2,460.1 1132.0,460.8 1132.0,473.1 1130.2,472.4" fill="#5d6068" /><polygon points="1131.0,461.0 1130.7,461.4 1130.7,471.9 1131.0,471.5" fill="#34363c" /><polygon points="1131.5,461.4 1131.2,461.7 1131.2,472.2 1131.5,471.9" fill="#34363c" /><polygon points="1130.2,478.3 1132.0,478.9 1132.0,493.8 1130.2,493.1" fill="#5d6068" /><polygon points="1131.0,479.2 1130.7,479.5 1130.7,492.6 1131.0,492.2" fill="#34363c" /><polygon points="1131.5,479.5 1131.2,479.8 1131.2,492.9 1131.5,492.6" fill="#34363c" /><polygon points="1138.4,436.8 1143.8,438.5 1143.8,447.1 1138.4,445.3" fill="#5d6068" /><polygon points="1139.2,437.7 1140.7,438.6 1140.7,445.3 1139.2,444.4" fill="#34363c" /><polygon points="1141.5,438.6 1143.0,439.4 1143.0,446.2 1141.5,445.3" fill="#34363c" /><polygon points="1138.4,447.9 1143.8,449.7 1143.8,460.9 1138.4,459.0" fill="#5d6068" /><polygon points="1139.2,448.8 1140.7,449.7 1140.7,459.0 1139.2,458.1" fill="#34363c" /><polygon points="1141.5,449.7 1143.0,450.6 1143.0,460.0 1141.5,459.0" fill="#34363c" /><polygon points="1138.4,463.0 1143.8,464.8 1143.8,477.3 1138.4,475.4" fill="#5d6068" /><polygon points="1139.2,463.9 1140.7,464.8 1140.7,475.4 1139.2,474.5" fill="#34363c" /><polygon points="1141.5,464.8 1143.0,465.7 1143.0,476.4 1141.5,475.4" fill="#34363c" /><polygon points="1138.4,481.3 1143.8,483.2 1143.8,498.3 1138.4,496.3" fill="#5d6068" /><polygon points="1139.2,482.2 1140.7,483.1 1140.7,496.4 1139.2,495.4" fill="#34363c" /><polygon points="1141.5,483.1 1143.0,484.1 1143.0,497.4 1141.5,496.4" fill="#34363c" /><polygon points="1155.5,442.2 1161.7,444.1 1161.7,452.8 1155.5,450.8" fill="#5d6068" /><polygon points="1156.3,443.1 1158.2,444.0 1158.2,450.9 1156.3,449.9" fill="#34363c" /><polygon points="1159.0,444.0 1160.9,445.0 1160.9,451.9 1159.0,450.9" fill="#34363c" /><polygon points="1155.5,453.5 1161.7,455.5 1161.7,466.9 1155.5,464.8" fill="#5d6068" /><polygon points="1156.3,454.4 1158.2,455.4 1158.2,465.0 1156.3,463.9" fill="#34363c" /><polygon points="1159.0,455.4 1160.9,456.4 1160.9,466.0 1159.0,465.0" fill="#34363c" /><polygon points="1155.5,468.8 1161.7,471.0 1161.7,483.7 1155.5,481.5" fill="#5d6068" /><polygon points="1156.3,469.7 1158.2,470.8 1158.2,481.7 1156.3,480.6" fill="#34363c" /><polygon points="1159.0,470.8 1160.9,471.9 1160.9,482.8 1159.0,481.7" fill="#34363c" /><polygon points="1155.5,487.5 1161.7,489.7 1161.7,505.2 1155.5,502.8" fill="#5d6068" /><polygon points="1156.3,488.4 1158.2,489.5 1158.2,503.1 1156.3,501.9" fill="#34363c" /><polygon points="1159.0,489.5 1160.9,490.6 1160.9,504.3 1159.0,503.1" fill="#34363c" /><polygon points="989.0,388.0 994.0,389.5 994.0,443.8 989.0,441.8" fill="#e97c54" /><polygon points="998.0,390.8 1001.0,391.7 1001.0,446.5 998.0,445.3" fill="#e97c54" /><polygon points="1005.4,393.1 1008.5,394.0 1008.5,449.4 1005.4,448.2" fill="#e97c54" /><polygon points="1011.6,395.0 1014.7,395.9 1014.7,451.8 1011.6,450.6" fill="#e97c54" /><polygon points="1021.0,397.9 1024.7,399.0 1024.7,455.6 1021.0,454.2" fill="#e97c54" /><polygon points="1027.8,400.0 1030.9,401.0 1030.9,458.0 1027.8,456.8" fill="#e97c54" /><polygon points="1032.7,401.5 1035.2,402.3 1035.2,459.7 1032.7,458.7" fill="#e97c54" /><polygon points="1041.4,404.2 1045.7,405.5 1045.7,463.7 1041.4,462.1" fill="#e97c54" /><polygon points="1053.0,407.8 1056.9,409.0 1056.9,468.1 1053.0,466.6" fill="#e97c54" /><polygon points="1063.0,410.9 1067.4,412.2 1067.4,472.1 1063.0,470.4" fill="#e97c54" /><polygon points="1073.6,414.2 1077.3,415.3 1077.3,475.9 1073.6,474.5" fill="#e97c54" /><polygon points="1084.0,417.4 1087.8,418.6 1087.8,480.0 1084.0,478.5" fill="#e97c54" /><polygon points="1091.6,419.7 1098.0,421.7 1098.0,483.9 1091.6,481.5" fill="#e97c54" /><polygon points="1104.0,423.6 1108.4,424.9 1108.4,488.0 1104.0,486.3" fill="#e97c54" /><polygon points="1115.0,427.0 1118.8,428.1 1118.8,492.0 1115.0,490.5" fill="#e97c54" /><polygon points="1125.5,430.2 1129.2,431.4 1129.2,496.0 1125.5,494.6" fill="#e97c54" /><polygon points="1133.0,432.5 1137.4,433.9 1137.4,499.2 1133.0,497.5" fill="#e97c54" /><polygon points="1144.8,436.2 1154.5,439.2 1154.5,505.8 1144.8,502.0" fill="#e97c54" /><polygon points="1162.7,441.7 1167.9,443.3 1167.9,510.9 1162.7,508.9" fill="#e97c54" /><polygon points="1170.8,444.2 1183.0,448.0 1183.0,516.8 1170.8,512.1" fill="#e97c54" /><path d="M989.6 409.5L1181.2 477.0" stroke="#eeeeee" stroke-width="2.4" /><path d="M989.6 428.0L1181.2 496.2" stroke="#eeeeee" stroke-width="2.2" /><path d="M1183.0 448.0L1181.0 516.0" stroke="#b86040" stroke-width="0.8" /><polygon points="1183.0,448.0 1204.0,444.0 1204.0,415.0 1322.0,366.0 1333.0,378.0 1330.0,430.0 1181.0,516.0" fill="#e3744c" /><polygon points="1206.6,417.9 1212.4,415.5 1212.4,495.9 1206.6,499.2" fill="#3c3d42" /><polygon points="1207.6,422.0 1211.4,419.5 1211.4,433.2 1207.6,435.8" fill="#5d6068" /><polygon points="1208.4,422.9 1210.6,420.4 1210.6,432.3 1208.4,434.9" fill="#34363c" /><polygon points="1207.6,439.9 1211.4,437.2 1211.4,450.9 1207.6,453.7" fill="#5d6068" /><polygon points="1208.4,440.8 1210.6,438.1 1210.6,450.0 1208.4,452.8" fill="#34363c" /><polygon points="1207.6,458.6 1211.4,455.7 1211.4,470.2 1207.6,473.2" fill="#5d6068" /><polygon points="1208.4,459.5 1210.6,456.6 1210.6,469.3 1208.4,472.3" fill="#34363c" /><polygon points="1207.6,478.9 1211.4,475.8 1211.4,491.9 1207.6,495.2" fill="#5d6068" /><polygon points="1208.4,479.8 1210.6,476.7 1210.6,491.0 1208.4,494.3" fill="#34363c" /><polygon points="1216.6,413.8 1222.4,411.4 1222.4,490.1 1216.6,493.5" fill="#3c3d42" /><polygon points="1217.6,417.8 1221.4,415.3 1221.4,428.7 1217.6,431.3" fill="#5d6068" /><polygon points="1218.4,418.7 1220.6,416.2 1220.6,427.8 1218.4,430.4" fill="#34363c" /><polygon points="1217.6,435.3 1221.4,432.6 1221.4,446.0 1217.6,448.8" fill="#5d6068" /><polygon points="1218.4,436.2 1220.6,433.5 1220.6,445.1 1218.4,447.9" fill="#34363c" /><polygon points="1217.6,453.6 1221.4,450.7 1221.4,464.9 1217.6,468.0" fill="#5d6068" /><polygon points="1218.4,454.5 1220.6,451.6 1220.6,464.0 1218.4,467.1" fill="#34363c" /><polygon points="1217.6,473.5 1221.4,470.4 1221.4,486.2 1217.6,489.5" fill="#5d6068" /><polygon points="1218.4,474.4 1220.6,471.3 1220.6,485.3 1218.4,488.6" fill="#34363c" /><polygon points="1225.1,410.2 1230.8,407.9 1230.8,485.3 1225.1,488.5" fill="#3c3d42" /><polygon points="1226.1,414.2 1229.8,411.7 1229.8,424.9 1226.1,427.5" fill="#5d6068" /><polygon points="1226.9,415.1 1229.0,412.6 1229.0,424.0 1226.9,426.6" fill="#34363c" /><polygon points="1226.1,431.4 1229.8,428.8 1229.8,441.9 1226.1,444.7" fill="#5d6068" /><polygon points="1226.9,432.3 1229.0,429.7 1229.0,441.0 1226.9,443.8" fill="#34363c" /><polygon points="1226.1,449.4 1229.8,446.6 1229.8,460.5 1226.1,463.5" fill="#5d6068" /><polygon points="1226.9,450.3 1229.0,447.5 1229.0,459.6 1226.9,462.6" fill="#34363c" /><polygon points="1226.1,469.0 1229.8,465.9 1229.8,481.4 1226.1,484.6" fill="#5d6068" /><polygon points="1226.9,469.9 1229.0,466.8 1229.0,480.5 1226.9,483.7" fill="#34363c" /><polygon points="1237.2,405.2 1243.0,402.8 1243.0,478.2 1237.2,481.6" fill="#3c3d42" /><polygon points="1238.2,409.0 1242.0,406.6 1242.0,419.4 1238.2,422.0" fill="#5d6068" /><polygon points="1239.0,409.9 1241.2,407.5 1241.2,418.5 1239.0,421.1" fill="#34363c" /><polygon points="1238.2,425.8 1242.0,423.2 1242.0,436.0 1238.2,438.8" fill="#5d6068" /><polygon points="1239.0,426.7 1241.2,424.1 1241.2,435.1 1239.0,437.9" fill="#34363c" /><polygon points="1238.2,443.4 1242.0,440.5 1242.0,454.1 1238.2,457.1" fill="#5d6068" /><polygon points="1239.0,444.3 1241.2,441.4 1241.2,453.2 1239.0,456.2" fill="#34363c" /><polygon points="1238.2,462.5 1242.0,459.4 1242.0,474.4 1238.2,477.7" fill="#5d6068" /><polygon points="1239.0,463.4 1241.2,460.3 1241.2,473.5 1239.0,476.8" fill="#34363c" /><polygon points="1245.6,401.7 1249.9,399.9 1249.9,474.2 1245.6,476.7" fill="#3c3d42" /><polygon points="1246.6,405.5 1248.9,403.7 1248.9,416.3 1246.6,418.2" fill="#5d6068" /><polygon points="1247.4,406.4 1248.1,404.6 1248.1,415.4 1247.4,417.3" fill="#34363c" /><polygon points="1246.6,422.0 1248.9,420.0 1248.9,432.6 1246.6,434.7" fill="#5d6068" /><polygon points="1247.4,422.9 1248.1,420.9 1248.1,431.7 1247.4,433.8" fill="#34363c" /><polygon points="1246.6,439.2 1248.9,437.1 1248.9,450.5 1246.6,452.7" fill="#5d6068" /><polygon points="1247.4,440.1 1248.1,438.0 1248.1,449.6 1247.4,451.8" fill="#34363c" /><polygon points="1246.6,458.0 1248.9,455.7 1248.9,470.5 1246.6,473.0" fill="#5d6068" /><polygon points="1247.4,458.9 1248.1,456.6 1248.1,469.6 1247.4,472.1" fill="#34363c" /><polygon points="1252.6,398.8 1257.7,396.7 1257.7,469.7 1252.6,472.7" fill="#3c3d42" /><polygon points="1253.6,402.5 1256.7,400.4 1256.7,412.8 1253.6,415.1" fill="#5d6068" /><polygon points="1254.4,403.4 1255.9,401.3 1255.9,411.9 1254.4,414.2" fill="#34363c" /><polygon points="1253.6,418.8 1256.7,416.4 1256.7,428.8 1253.6,431.3" fill="#5d6068" /><polygon points="1254.4,419.7 1255.9,417.3 1255.9,427.9 1254.4,430.4" fill="#34363c" /><polygon points="1253.6,435.7 1256.7,433.2 1256.7,446.4 1253.6,449.0" fill="#5d6068" /><polygon points="1254.4,436.6 1255.9,434.1 1255.9,445.5 1254.4,448.1" fill="#34363c" /><polygon points="1253.6,454.2 1256.7,451.5 1256.7,466.1 1253.6,469.0" fill="#5d6068" /><polygon points="1254.4,455.1 1255.9,452.4 1255.9,465.2 1254.4,468.1" fill="#34363c" /><polygon points="1261.6,395.1 1265.4,393.5 1265.4,465.3 1261.6,467.5" fill="#3c3d42" /><polygon points="1262.6,398.7 1264.4,397.1 1264.4,409.3 1262.6,411.0" fill="#5d6068" /><polygon points="1263.4,399.6 1263.6,398.0 1263.6,408.4 1263.4,410.1" fill="#34363c" /><polygon points="1262.6,414.6 1264.4,412.9 1264.4,425.1 1262.6,426.9" fill="#5d6068" /><polygon points="1263.4,415.5 1263.6,413.8 1263.6,424.2 1263.4,426.0" fill="#34363c" /><polygon points="1262.6,431.3 1264.4,429.4 1264.4,442.3 1262.6,444.3" fill="#5d6068" /><polygon points="1263.4,432.2 1263.6,430.3 1263.6,441.4 1263.4,443.4" fill="#34363c" /><polygon points="1262.6,449.4 1264.4,447.3 1264.4,461.7 1262.6,463.9" fill="#5d6068" /><polygon points="1263.4,450.3 1263.6,448.2 1263.6,460.8 1263.4,463.0" fill="#34363c" /><polygon points="1270.2,391.5 1275.0,389.5 1275.0,459.7 1270.2,462.5" fill="#3c3d42" /><polygon points="1271.2,395.1 1274.0,393.0 1274.0,405.0 1271.2,407.1" fill="#5d6068" /><polygon points="1272.0,396.0 1273.2,393.9 1273.2,404.1 1272.0,406.2" fill="#34363c" /><polygon points="1271.2,410.7 1274.0,408.5 1274.0,420.4 1271.2,422.8" fill="#5d6068" /><polygon points="1272.0,411.6 1273.2,409.4 1273.2,419.5 1272.0,421.9" fill="#34363c" /><polygon points="1271.2,427.0 1274.0,424.6 1274.0,437.3 1271.2,439.8" fill="#5d6068" /><polygon points="1272.0,427.9 1273.2,425.5 1273.2,436.4 1272.0,438.9" fill="#34363c" /><polygon points="1271.2,444.8 1274.0,442.2 1274.0,456.2 1271.2,459.0" fill="#5d6068" /><polygon points="1272.0,445.7 1273.2,443.1 1273.2,455.3 1272.0,458.1" fill="#34363c" /><polygon points="1278.6,388.0 1282.8,386.3 1282.8,455.2 1278.6,457.7" fill="#3c3d42" /><polygon points="1279.6,391.5 1281.8,389.7 1281.8,401.5 1279.6,403.3" fill="#5d6068" /><polygon points="1280.4,392.4 1281.0,390.6 1281.0,400.6 1280.4,402.4" fill="#34363c" /><polygon points="1279.6,406.8 1281.8,404.9 1281.8,416.6 1279.6,418.7" fill="#5d6068" /><polygon points="1280.4,407.7 1281.0,405.8 1281.0,415.7 1280.4,417.8" fill="#34363c" /><polygon points="1279.6,422.8 1281.8,420.8 1281.8,433.2 1279.6,435.4" fill="#5d6068" /><polygon points="1280.4,423.7 1281.0,421.7 1281.0,432.3 1280.4,434.5" fill="#34363c" /><polygon points="1279.6,440.3 1281.8,438.0 1281.8,451.8 1279.6,454.2" fill="#5d6068" /><polygon points="1280.4,441.2 1281.0,438.9 1281.0,450.9 1280.4,453.3" fill="#34363c" /><polygon points="1285.6,385.1 1290.4,383.1 1290.4,450.9 1285.6,453.6" fill="#3c3d42" /><polygon points="1286.6,388.5 1289.4,386.5 1289.4,398.0 1286.6,400.2" fill="#5d6068" /><polygon points="1287.4,389.4 1288.6,387.4 1288.6,397.1 1287.4,399.3" fill="#34363c" /><polygon points="1286.6,403.6 1289.4,401.4 1289.4,412.9 1286.6,415.3" fill="#5d6068" /><polygon points="1287.4,404.5 1288.6,402.3 1288.6,412.0 1287.4,414.4" fill="#34363c" /><polygon points="1286.6,419.4 1289.4,417.0 1289.4,429.2 1286.6,431.7" fill="#5d6068" /><polygon points="1287.4,420.3 1288.6,417.9 1288.6,428.3 1287.4,430.8" fill="#34363c" /><polygon points="1286.6,436.5 1289.4,433.9 1289.4,447.5 1286.6,450.2" fill="#5d6068" /><polygon points="1287.4,437.4 1288.6,434.8 1288.6,446.6 1287.4,449.3" fill="#34363c" /><polygon points="1292.6,382.2 1296.7,380.5 1296.7,447.2 1292.6,449.6" fill="#3c3d42" /><polygon points="1293.6,385.6 1295.7,383.8 1295.7,395.2 1293.6,397.0" fill="#5d6068" /><polygon points="1294.4,386.5 1294.9,384.7 1294.9,394.3 1294.4,396.1" fill="#34363c" /><polygon points="1293.6,400.4 1295.7,398.5 1295.7,409.9 1293.6,411.9" fill="#5d6068" /><polygon points="1294.4,401.3 1294.9,399.4 1294.9,409.0 1294.4,411.0" fill="#34363c" /><polygon points="1293.6,415.9 1295.7,413.9 1295.7,425.9 1293.6,428.0" fill="#5d6068" /><polygon points="1294.4,416.8 1294.9,414.8 1294.9,425.0 1294.4,427.1" fill="#34363c" /><polygon points="1293.6,432.7 1295.7,430.5 1295.7,443.9 1293.6,446.2" fill="#5d6068" /><polygon points="1294.4,433.6 1294.9,431.4 1294.9,443.0 1294.4,445.3" fill="#34363c" /><polygon points="1299.6,379.3 1305.4,376.9 1305.4,442.2 1299.6,445.5" fill="#3c3d42" /><polygon points="1300.6,382.6 1304.4,380.2 1304.4,391.3 1300.6,393.9" fill="#5d6068" /><polygon points="1301.4,383.5 1303.6,381.1 1303.6,390.4 1301.4,393.0" fill="#34363c" /><polygon points="1300.6,397.2 1304.4,394.5 1304.4,405.6 1300.6,408.4" fill="#5d6068" /><polygon points="1301.4,398.1 1303.6,395.4 1303.6,404.7 1301.4,407.5" fill="#34363c" /><polygon points="1300.6,412.4 1304.4,409.5 1304.4,421.3 1300.6,424.3" fill="#5d6068" /><polygon points="1301.4,413.3 1303.6,410.4 1303.6,420.4 1301.4,423.4" fill="#34363c" /><polygon points="1300.6,429.0 1304.4,425.9 1304.4,438.9 1300.6,442.2" fill="#5d6068" /><polygon points="1301.4,429.9 1303.6,426.8 1303.6,438.0 1301.4,441.3" fill="#34363c" /><polygon points="1308.3,375.7 1312.4,374.0 1312.4,438.2 1308.3,440.5" fill="#3c3d42" /><polygon points="1309.3,378.9 1311.4,377.2 1311.4,388.1 1309.3,390.0" fill="#5d6068" /><polygon points="1310.1,379.8 1310.6,378.1 1310.6,387.2 1310.1,389.1" fill="#34363c" /><polygon points="1309.3,393.2 1311.4,391.3 1311.4,402.2 1309.3,404.2" fill="#5d6068" /><polygon points="1310.1,394.1 1310.6,392.2 1310.6,401.3 1310.1,403.3" fill="#34363c" /><polygon points="1309.3,408.1 1311.4,406.1 1311.4,417.6 1309.3,419.8" fill="#5d6068" /><polygon points="1310.1,409.0 1310.6,407.0 1310.6,416.7 1310.1,418.9" fill="#34363c" /><polygon points="1309.3,424.3 1311.4,422.1 1311.4,434.9 1309.3,437.3" fill="#5d6068" /><polygon points="1310.1,425.2 1310.6,423.0 1310.6,434.0 1310.1,436.4" fill="#34363c" /><polygon points="1315.2,372.8 1319.4,371.1 1319.4,434.1 1315.2,436.5" fill="#3c3d42" /><polygon points="1316.2,376.0 1318.4,374.2 1318.4,384.9 1316.2,386.8" fill="#5d6068" /><polygon points="1317.0,376.9 1317.6,375.1 1317.6,384.0 1317.0,385.9" fill="#34363c" /><polygon points="1316.2,390.0 1318.4,388.1 1318.4,398.8 1316.2,400.9" fill="#5d6068" /><polygon points="1317.0,390.9 1317.6,389.0 1317.6,397.9 1317.0,400.0" fill="#34363c" /><polygon points="1316.2,404.7 1318.4,402.6 1318.4,413.9 1316.2,416.2" fill="#5d6068" /><polygon points="1317.0,405.6 1317.6,403.5 1317.6,413.0 1317.0,415.3" fill="#34363c" /><polygon points="1316.2,420.6 1318.4,418.4 1318.4,431.0 1316.2,433.4" fill="#5d6068" /><polygon points="1317.0,421.5 1317.6,419.3 1317.6,430.1 1317.0,432.5" fill="#34363c" /><polygon points="1323.0,384.0 1327.0,382.0 1327.0,428.0 1323.0,430.0" fill="#4a4b50" /><path d="M1181.0 477.0L1331.0 398.5" stroke="#eeeeee" stroke-width="2.4" /><path d="M1181.0 497.0L1331.0 415.0" stroke="#eeeeee" stroke-width="2.2" /><polygon points="1256.6,452.0 1266.0,447.5 1266.0,472.0 1256.6,477.0" fill="#2c2d33" /><polygon points="1256.6,467.0 1265.0,463.0 1265.0,472.5 1256.6,477.0" fill="#2a9a9a" /><polygon points="1195.0,482.0 1217.0,473.0 1217.0,478.0 1195.0,488.0" fill="#2e3036" /><polygon points="1196.0,482.5 1216.0,474.0 1216.0,475.5 1196.0,484.0" fill="#c0c0cc" /><polygon points="1289.5,432.0 1307.7,424.0 1307.7,429.0 1289.5,437.0" fill="#2e3036" /><polygon points="1290.0,432.5 1307.0,425.0 1307.0,426.5 1290.0,434.0" fill="#c0c0cc" /><polygon points="989.0,388.0 1154.0,340.0 1243.0,358.0 1246.0,366.0 1134.0,397.0 1134.0,428.0 1204.0,443.0 1183.0,448.0" fill="#b4b4d2" /><polygon points="989.0,386.0 1154.0,338.5 1154.0,345.0 994.0,392.0" fill="#e97c54" /><polygon points="1154.0,338.5 1243.0,356.5 1243.0,363.0 1152.0,345.0" fill="#e97c54" /><path d="M989.0 388.0L1183.0 448.0" stroke="#5a5a5a" stroke-width="1.3" /><path d="M989.0 386.0L1154.0 338.5" stroke="#5a5a5a" stroke-width="1.1" /><path d="M1154.0 338.5L1243.0 356.5" stroke="#5a5a5a" stroke-width="1.1" /><clipPath id="rl"><polygon points="989.0,388.0 1154.0,340.0 1243.0,358.0 1246.0,366.0 1134.0,397.0 1134.0,428.0 1204.0,443.0 1183.0,448.0"/></clipPath><g clip-path="url(#rl)"><path d="M1038.5 373.6L1213.1 427.6" stroke="#585860" stroke-width="1.2" /><path d="M1079.8 361.6L1254.3 415.6" stroke="#585860" stroke-width="1.2" /><path d="M1121.0 349.6L1295.6 403.6" stroke="#585860" stroke-width="1.2" /><path d="M1031.7 401.2L1163.7 362.8" stroke="#585860" stroke-width="1.2" /><path d="M1076.3 415.0L1208.3 376.6" stroke="#585860" stroke-width="1.2" /><path d="M1120.9 428.8L1252.9 390.4" stroke="#585860" stroke-width="1.2" /><path d="M1159.7 440.8L1291.7 402.4" stroke="#585860" stroke-width="1.2" /></g><polygon points="1096.0,388.0 1104.0,388.5 1138.0,395.0 1134.0,405.0 1096.0,394.0" fill="#f4f2dc" /><polygon points="1103.7,381.3 1138.3,371.6 1138.3,395.0 1103.7,388.5" fill="#f2f1e8" /><polygon points="1103.7,382.3 1107.5,381.2 1107.5,388.2 1103.7,387.5" fill="#393a40" /><polygon points="1114.0,379.4 1120.0,377.7 1120.0,390.6 1114.0,389.4" fill="#393a40" /><polygon points="1123.0,376.9 1128.0,375.5 1128.0,392.1 1123.0,391.1" fill="#393a40" /><polygon points="1131.0,374.6 1136.5,373.1 1136.5,393.7 1131.0,392.6" fill="#393a40" /><polygon points="1121.4,357.9 1138.3,361.9 1138.3,371.6 1121.4,376.3" fill="#dd6e46" /><polygon points="1122.5,366.0 1127.0,367.0 1127.0,373.5 1122.5,374.5" fill="#8a5a4a" /><polygon points="1138.3,361.9 1159.3,360.3 1159.3,386.9 1138.3,395.0" fill="#e97d53" /><polygon points="1149.6,364.5 1156.9,364.0 1156.9,388.0 1149.6,391.0" fill="#3a3a40" /><polygon points="1121.4,357.9 1131.0,353.5 1159.3,356.5 1159.3,360.3 1138.3,361.9" fill="#b4b4d2" /><polygon points="1159.3,362.0 1214.0,373.0 1214.0,382.0 1159.3,387.0" fill="#f2f0e2" /><polygon points="1163.0,363.7 1167.0,364.5 1167.0,386.3 1163.0,386.7" fill="#36373c" /><polygon points="1172.0,365.6 1176.0,366.4 1176.0,385.5 1172.0,385.8" fill="#36373c" /><polygon points="1181.0,367.4 1185.0,368.2 1185.0,384.7 1181.0,385.0" fill="#36373c" /><polygon points="1190.0,369.2 1194.0,370.0 1194.0,383.8 1190.0,384.2" fill="#36373c" /><polygon points="1199.0,371.0 1203.0,371.8 1203.0,383.0 1199.0,383.4" fill="#36373c" /><polygon points="1207.0,372.6 1211.0,373.4 1211.0,382.3 1207.0,382.6" fill="#36373c" /><polygon points="1134.0,397.0 1204.0,415.0 1204.0,443.0 1134.0,428.0" fill="#e67652" /><polygon points="1142.0,415.0 1148.0,416.0 1148.0,427.0 1142.0,426.0" fill="#c98a70" /><path d="M1134.0 428.0L1204.0 443.0" stroke="#777" stroke-width="0.8" /><path d="M1188.7 429.3L1188.7 415.0" stroke="#1010ff" stroke-width="1.3" /><path d="M1188.7 429.3L1179.8 433.0" stroke="#ff1010" stroke-width="1.3" /><path d="M1188.7 429.3L1199.8 432.3" stroke="#10e010" stroke-width="1.3" /><polygon points="1134.0,397.0 1243.0,358.0 1252.0,353.0 1322.0,366.0 1204.0,415.0" fill="#b4b4d2" /><polygon points="1134.0,397.0 1247.0,366.0 1247.0,373.0 1139.0,402.0" fill="#e97c54" /><polygon points="1243.0,356.0 1252.0,352.0 1322.0,365.0 1318.0,371.0 1252.0,358.0" fill="#e97c54" /><polygon points="1322.0,365.0 1333.0,377.0 1329.0,381.0 1318.0,371.0" fill="#d86e48" /><path d="M1204.0 415.0L1322.0 366.0" stroke="#5a5a5a" stroke-width="1.3" /><clipPath id="rr"><polygon points="1134.0,397.0 1243.0,358.0 1252.0,353.0 1322.0,366.0 1204.0,415.0"/></clipPath><g clip-path="url(#rr)"><path d="M1161.8 406.6L1271.8 374.6" stroke="#585860" stroke-width="1.2" /><path d="M1184.5 411.1L1294.5 379.1" stroke="#585860" stroke-width="1.2" /><path d="M1160.6 396.2L1222.6 411.2" stroke="#585860" stroke-width="1.2" /><path d="M1187.6 388.9L1249.6 403.9" stroke="#585860" stroke-width="1.2" /><path d="M1214.6 381.7L1276.6 396.7" stroke="#585860" stroke-width="1.2" /></g><path d="M1001.0 383.0L1128.0 346.0" stroke="#5e5e66" stroke-width="1.1" /><path d="M1033.0 391.0L1114.0 370.0" stroke="#5e5e66" stroke-width="1.1" /><path d="M1057.0 372.0L1131.0 414.0" stroke="#5e5e66" stroke-width="1.1" /><path d="M1020.0 380.0L1075.0 408.0" stroke="#5e5e66" stroke-width="1.1" /><path d="M1040.0 398.0L1125.0 373.0" stroke="#5e5e66" stroke-width="1.1" /><path d="M1150.0 352.0L1230.0 366.0" stroke="#5e5e66" stroke-width="1.1" /><path d="M1168.0 395.0L1240.0 375.0" stroke="#5e5e66" stroke-width="1.1" /><path d="M1200.0 402.0L1250.0 390.0" stroke="#5e5e66" stroke-width="1.1" /><path d="M1258.0 368.0L1300.0 377.0" stroke="#5e5e66" stroke-width="1.1" /><path d="M1225.0 368.0L1290.0 380.0" stroke="#5e5e66" stroke-width="1.1" /><rect x="1017.6" y="378.9" width="3.2" height="10.3" fill="#dcdcdc" stroke="#6a6a6a" stroke-width="0.6"/><rect x="1022.1" y="380.1" width="3.2" height="9.2" fill="#dcdcdc" stroke="#6a6a6a" stroke-width="0.6"/><path d="M1017.0 386.4L1026.0 385.1" stroke="#777" stroke-width="0.8" /><rect x="1030.4" y="383.1" width="3.2" height="7.6" fill="#dcdcdc" stroke="#6a6a6a" stroke-width="0.6"/><rect x="1034.4" y="383.8" width="3.2" height="7.0" fill="#dcdcdc" stroke="#6a6a6a" stroke-width="0.6"/><path d="M1030.0 388.5L1038.0 387.5" stroke="#777" stroke-width="0.8" /><rect x="1049.7" y="378.3" width="3.2" height="8.3" fill="#dcdcdc" stroke="#6a6a6a" stroke-width="0.6"/><rect x="1054.2" y="376.2" width="3.2" height="10.0" fill="#dcdcdc" stroke="#6a6a6a" stroke-width="0.6"/><path d="M1049.0 383.8L1058.0 382.6" stroke="#777" stroke-width="0.8" /><rect x="1060.9" y="391.0" width="3.2" height="8.5" fill="#dcdcdc" stroke="#6a6a6a" stroke-width="0.6"/><rect x="1065.9" y="393.5" width="3.2" height="6.4" fill="#dcdcdc" stroke="#6a6a6a" stroke-width="0.6"/><path d="M1060.0 397.5L1070.0 396.5" stroke="#777" stroke-width="0.8" /><rect x="1078.9" y="367.8" width="3.2" height="7.8" fill="#dcdcdc" stroke="#6a6a6a" stroke-width="0.6"/><rect x="1083.9" y="367.7" width="3.2" height="7.9" fill="#dcdcdc" stroke="#6a6a6a" stroke-width="0.6"/><rect x="1088.9" y="370.0" width="3.2" height="6.0" fill="#dcdcdc" stroke="#6a6a6a" stroke-width="0.6"/><path d="M1078.0 373.5L1093.0 372.5" stroke="#777" stroke-width="0.8" /><rect x="1078.4" y="398.7" width="3.2" height="8.8" fill="#dcdcdc" stroke="#6a6a6a" stroke-width="0.6"/><rect x="1082.4" y="400.0" width="3.2" height="7.6" fill="#dcdcdc" stroke="#6a6a6a" stroke-width="0.6"/><path d="M1078.0 404.8L1086.0 403.6" stroke="#777" stroke-width="0.8" /><rect x="1089.6" y="393.3" width="3.2" height="11.7" fill="#dcdcdc" stroke="#6a6a6a" stroke-width="0.6"/><rect x="1093.9" y="394.1" width="3.2" height="11.0" fill="#dcdcdc" stroke="#6a6a6a" stroke-width="0.6"/><rect x="1098.2" y="391.7" width="3.2" height="13.0" fill="#dcdcdc" stroke="#6a6a6a" stroke-width="0.6"/><path d="M1089.0 401.4L1102.0 399.8" stroke="#777" stroke-width="0.8" /><rect x="1108.9" y="398.7" width="3.2" height="9.6" fill="#dcdcdc" stroke="#6a6a6a" stroke-width="0.6"/><rect x="1111.9" y="399.6" width="3.2" height="8.8" fill="#dcdcdc" stroke="#6a6a6a" stroke-width="0.6"/><path d="M1109.0 405.1L1115.0 403.7" stroke="#777" stroke-width="0.8" /><rect x="1112.7" y="358.6" width="3.2" height="7.2" fill="#dcdcdc" stroke="#6a6a6a" stroke-width="0.6"/><rect x="1117.2" y="359.2" width="3.2" height="6.6" fill="#dcdcdc" stroke="#6a6a6a" stroke-width="0.6"/><path d="M1112.0 363.5L1121.0 362.5" stroke="#777" stroke-width="0.8" /><rect x="1064.9" y="388.0" width="3.2" height="3.4" fill="#dcdcdc" stroke="#6a6a6a" stroke-width="0.6"/><rect x="1069.9" y="387.1" width="3.2" height="4.2" fill="#dcdcdc" stroke="#6a6a6a" stroke-width="0.6"/><path d="M1064.0 390.2L1074.0 389.8" stroke="#777" stroke-width="0.8" /><rect x="1140.2" y="344.6" width="3.2" height="10.5" fill="#dcdcdc" stroke="#6a6a6a" stroke-width="0.6"/><rect x="1145.7" y="343.8" width="3.2" height="11.2" fill="#dcdcdc" stroke="#6a6a6a" stroke-width="0.6"/><path d="M1139.0 351.4L1150.0 349.8" stroke="#777" stroke-width="0.8" /><rect x="1168.9" y="349.4" width="3.2" height="11.6" fill="#dcdcdc" stroke="#6a6a6a" stroke-width="0.6"/><rect x="1173.9" y="348.1" width="3.2" height="12.6" fill="#dcdcdc" stroke="#6a6a6a" stroke-width="0.6"/><path d="M1168.0 357.8L1178.0 356.2" stroke="#777" stroke-width="0.8" /><rect x="1194.2" y="357.3" width="3.2" height="5.7" fill="#dcdcdc" stroke="#6a6a6a" stroke-width="0.6"/><rect x="1199.7" y="356.3" width="3.2" height="6.6" fill="#dcdcdc" stroke="#6a6a6a" stroke-width="0.6"/><path d="M1193.0 360.9L1204.0 359.9" stroke="#777" stroke-width="0.8" /><rect x="1208.5" y="359.4" width="3.2" height="7.3" fill="#dcdcdc" stroke="#6a6a6a" stroke-width="0.6"/><rect x="1212.8" y="359.9" width="3.2" height="6.9" fill="#dcdcdc" stroke="#6a6a6a" stroke-width="0.6"/><rect x="1217.0" y="359.4" width="3.2" height="7.3" fill="#dcdcdc" stroke="#6a6a6a" stroke-width="0.6"/><rect x="1221.3" y="360.0" width="3.2" height="6.8" fill="#dcdcdc" stroke="#6a6a6a" stroke-width="0.6"/><path d="M1208.0 364.1L1225.0 363.1" stroke="#777" stroke-width="0.8" /><rect x="1169.6" y="392.3" width="3.2" height="14.2" fill="#dcdcdc" stroke="#6a6a6a" stroke-width="0.6"/><rect x="1173.9" y="394.6" width="3.2" height="12.3" fill="#dcdcdc" stroke="#6a6a6a" stroke-width="0.6"/><rect x="1178.2" y="392.5" width="3.2" height="14.0" fill="#dcdcdc" stroke="#6a6a6a" stroke-width="0.6"/><rect x="1182.6" y="395.3" width="3.2" height="11.6" fill="#dcdcdc" stroke="#6a6a6a" stroke-width="0.6"/><rect x="1186.9" y="395.0" width="3.2" height="11.9" fill="#dcdcdc" stroke="#6a6a6a" stroke-width="0.6"/><rect x="1191.2" y="390.6" width="3.2" height="15.7" fill="#dcdcdc" stroke="#6a6a6a" stroke-width="0.6"/><path d="M1169.0 402.4L1195.0 400.4" stroke="#777" stroke-width="0.8" /><rect x="1205.9" y="397.3" width="3.2" height="5.7" fill="#dcdcdc" stroke="#6a6a6a" stroke-width="0.6"/><rect x="1210.9" y="397.5" width="3.2" height="5.6" fill="#dcdcdc" stroke="#6a6a6a" stroke-width="0.6"/><rect x="1215.9" y="399.0" width="3.2" height="4.2" fill="#dcdcdc" stroke="#6a6a6a" stroke-width="0.6"/><path d="M1205.0 401.6L1220.0 400.9" stroke="#777" stroke-width="0.8" /><rect x="1266.9" y="368.9" width="3.2" height="5.2" fill="#dcdcdc" stroke="#6a6a6a" stroke-width="0.6"/><rect x="1269.9" y="369.3" width="3.2" height="4.8" fill="#dcdcdc" stroke="#6a6a6a" stroke-width="0.6"/><path d="M1267.0 372.6L1273.0 371.9" stroke="#777" stroke-width="0.8" /><rect x="1281.9" y="371.6" width="3.2" height="5.4" fill="#dcdcdc" stroke="#6a6a6a" stroke-width="0.6"/><rect x="1286.9" y="372.1" width="3.2" height="5.0" fill="#dcdcdc" stroke="#6a6a6a" stroke-width="0.6"/><path d="M1281.0 375.6L1291.0 374.9" stroke="#777" stroke-width="0.8" /><path d="M1031.5 368.0L1031.5 391.0" stroke="#7a7a7a" stroke-width="1.1" /><path d="M1061.0 360.0L1061.0 378.0" stroke="#7a7a7a" stroke-width="1.1" /><path d="M1088.7 354.0L1088.7 375.0" stroke="#7a7a7a" stroke-width="1.1" /><path d="M1114.5 346.0L1114.5 365.0" stroke="#7a7a7a" stroke-width="1.1" /><path d="M1117.7 395.0L1117.7 415.0" stroke="#7a7a7a" stroke-width="1.1" /><path d="M1144.3 337.0L1144.3 357.0" stroke="#7a7a7a" stroke-width="1.1" /><path d="M1174.0 338.0L1174.0 358.0" stroke="#7a7a7a" stroke-width="1.1" /><path d="M1219.4 347.0L1219.4 364.0" stroke="#7a7a7a" stroke-width="1.1" /><path d="M1258.0 352.0L1258.0 368.0" stroke="#7a7a7a" stroke-width="1.1" /><path d="M1280.0 354.0L1280.0 370.0" stroke="#7a7a7a" stroke-width="1.1" /><path d="M1185.0 385.0L1185.0 400.0" stroke="#7a7a7a" stroke-width="1.1" /></svg><!-- BUILDING END -->
<!-- axis indicator -->
<svg style="left:540px;top:625px" width="80" height="75">
<path d="M36 53V30" stroke="#0000ff" stroke-width="2"/>
<path d="M36 24.5L33 33.5H39Z" fill="#0000ff"/>
<path d="M36 53.5L21 59" stroke="#ff0000" stroke-width="2"/>
<path d="M15 61.5L23 56L25 62Z" fill="#ff0000"/>
<path d="M36 53.5L52 58" stroke="#00e000" stroke-width="2"/>
<path d="M60.5 60L49.5 55L49 62Z" fill="#00e000"/>
<defs><radialGradient id="sph" cx="0.4" cy="0.35" r="0.7"><stop offset="0" stop-color="#ddd"/><stop offset="1" stop-color="#777"/></radialGradient></defs>
<circle cx="36" cy="53.4" r="4.6" fill="url(#sph)"/>
<text x="37" y="19" font-size="9.2" fill="#0000ff" font-family="Liberation Sans">Z</text>
<text x="8" y="64" font-size="9.5" fill="#ff0000" font-family="Liberation Sans">X</text>
<text x="66.5" y="62" font-size="9.5" fill="#00d000" font-family="Liberation Sans">Y</text>
</svg>

<!-- view cube -->
<svg style="left:1660px;top:60px" width="120" height="110">
<path d="M19.8 25.2L57.3 20.2L97.5 25L62 32Z" fill="#fdfdfd" stroke="#333" stroke-width="1.2" stroke-linejoin="round"/>
<path d="M19.8 25.2L62 32L62 96.6L23.9 74.8Z" fill="#fafafa" stroke="#333" stroke-width="1.2" stroke-linejoin="round"/>
<path d="M62 32L97.5 25L93.5 73.7L62 96.6Z" fill="#f7f7f7" stroke="#333" stroke-width="1.2" stroke-linejoin="round"/>
<text transform="matrix(1,0.33,0,1,28,62)" x="0" y="0" font-size="18" textLength="24" lengthAdjust="spacingAndGlyphs" fill="#8c8c8c" font-family="Liberation Sans">Справа</text>
<text transform="matrix(1,-0.42,0,1,71,69)" x="0" y="0" font-size="20" textLength="19" lengthAdjust="spacingAndGlyphs" fill="#8c8c8c" font-family="Liberation Sans">Сзади</text>
</svg>
</body></html>
